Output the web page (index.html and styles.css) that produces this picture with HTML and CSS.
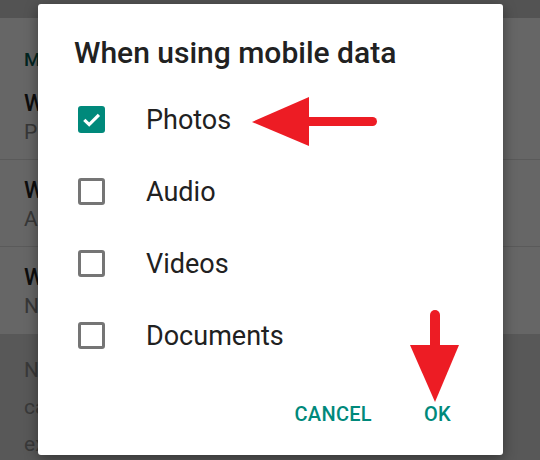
FILE: index.html
```html
<!DOCTYPE html>
<html lang="en">
<head>
    <meta charset="UTF-8">
    <meta name="viewport" content="width=device-width, initial-scale=1.0">
    <title>Media auto-download</title>
    <link rel="stylesheet" href="styles.css">
</head>
<body>
    <div class="screen">
        <div class="toolbar"></div>
        <div class="settings">
            <p class="section-title">Media auto-download</p>
            <div class="setting">
                <p class="setting-name">When using mobile data</p>
                <p class="setting-value">Photos</p>
            </div>
            <div class="setting">
                <p class="setting-name">When connected on Wi-Fi</p>
                <p class="setting-value">All media</p>
            </div>
            <div class="setting">
                <p class="setting-name">When roaming</p>
                <p class="setting-value">No media</p>
            </div>
        </div>
        <p class="footnote">Note: voice messages are always<br>can be downloaded automatically for the best<br>experience.</p>
    </div>

    <!-- dim layer behind the dialog -->
    <div class="scrim"></div>

    <div class="dialog">
        <h2 class="dialog-title">When using mobile data</h2>
        <ul class="options">
            <li class="option">
                <span class="checkbox checked">
                    <svg viewBox="0 0 27 27" width="27" height="27"><path d="M6.3 13.8 L11.2 18.6 L20.9 8.9" fill="none" stroke="#fff" stroke-width="3.2"/></svg>
                </span>
                <span class="option-label">Photos</span>
            </li>
            <li class="option">
                <span class="checkbox"></span>
                <span class="option-label">Audio</span>
            </li>
            <li class="option">
                <span class="checkbox"></span>
                <span class="option-label">Videos</span>
            </li>
            <li class="option">
                <span class="checkbox"></span>
                <span class="option-label">Documents</span>
            </li>
        </ul>
        <div class="dialog-actions">
            <button class="action">Cancel</button>
            <button class="action">OK</button>
        </div>
    </div>

    <!-- red annotation arrows -->
    <svg class="arrows" width="540" height="460" viewBox="0 0 540 460">
        <line x1="306" y1="121.5" x2="372.5" y2="121.5" stroke="#ed1c24" stroke-width="9" stroke-linecap="round"/>
        <polygon points="252,122 309,97 309,146" fill="#ed1c24"/>
        <line x1="435" y1="315" x2="435" y2="350" stroke="#ed1c24" stroke-width="10" stroke-linecap="round"/>
        <polygon points="410,345 459,345 435,402" fill="#ed1c24"/>
    </svg>
</body>
</html>
```

FILE: styles.css
```css
body {
    margin: 0;
    font-family: Roboto, "Noto Sans", sans-serif;
    width: 540px;
    height: 460px;
    overflow: hidden;
    position: relative;
}
p {
    margin: 0;
}
.screen {
    height: 460px;
    background-color: #dcdcdc;
}
.toolbar {
    height: 18px;
    background-color: #d0d0d0;
}
.settings {
    background-color: #ffffff;
}
.section-title {
    height: 55px;
    box-sizing: border-box;
    padding: 32px 0 0 24px;
    font-size: 19px;
    font-weight: 500;
    color: #075e54;
    line-height: 20px;
}
.setting {
    height: 87px;
    box-sizing: border-box;
    padding: 17px 0 0 24px;
    border-bottom: 1px solid #e2e2e2;
}
.setting:last-child {
    border-bottom: none;
}
.setting-name {
    font-size: 23px;
    font-weight: 500;
    color: #222222;
    line-height: 28px;
}
.setting-value {
    font-size: 21px;
    color: #8a8a8a;
    line-height: 28px;
}
.footnote {
    padding: 18px 24px;
    font-size: 21px;
    line-height: 37px;
    color: #8f8f8f;
}
.scrim {
    position: absolute;
    inset: 0;
    background-color: rgba(0, 0, 0, 0.6);
}
.dialog {
    position: absolute;
    left: 38px;
    top: 4px;
    width: 465px;
    height: 451px;
    box-sizing: border-box;
    padding: 32px 52px 0 40px;
    background-color: #ffffff;
    border-radius: 3px;
    box-shadow: 0 4px 14px rgba(0, 0, 0, 0.4);
    display: flex;
    flex-direction: column;
}
.dialog-title {
    margin: 0 0 13.5px -4px;
    font-size: 30px;
    line-height: 34px;
    font-weight: 500;
    color: #212121;
}
.options {
    list-style: none;
    margin: 0;
    padding: 0;
}
.option {
    height: 72px;
    display: flex;
    align-items: center;
}
.checkbox {
    width: 27px;
    height: 27px;
    box-sizing: border-box;
    border: 3px solid #757575;
    border-radius: 3px;
    flex-shrink: 0;
}
.checkbox.checked {
    border: none;
    background-color: #00897b;
}
.checkbox svg {
    display: block;
}
.option-label {
    margin-left: 41px;
    font-size: 27px;
    line-height: 30px;
    color: #212121;
}
.dialog-actions {
    margin-top: 30px;
    display: flex;
    justify-content: flex-end;
    gap: 52px;
}
.action {
    padding: 0;
    border: none;
    background: none;
    font-family: Roboto, sans-serif;
    font-size: 20px;
    font-weight: 500;
    line-height: 24px;
    letter-spacing: 0.3px;
    text-transform: uppercase;
    color: #00897b;
    cursor: pointer;
}
.arrows {
    position: absolute;
    left: 0;
    top: 0;
}
```
